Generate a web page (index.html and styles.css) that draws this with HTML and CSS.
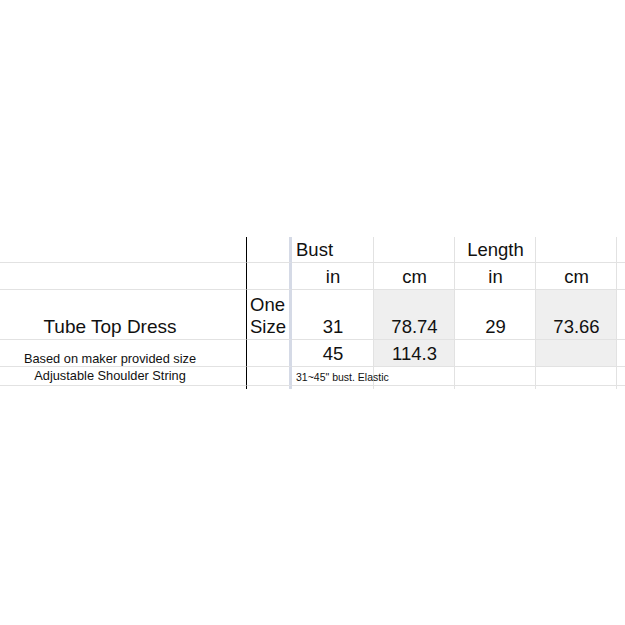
FILE: index.html
```html
<!DOCTYPE html>
<html>
<head>
<meta charset="utf-8">
<link rel="stylesheet" href="styles.css">
</head>
<body>
<div class="sheet">
  <div class="cell name"></div>
  <div class="cell size"></div>
  <div class="cell left">Bust</div>
  <div class="cell"></div>
  <div class="cell center">Length</div>
  <div class="cell"></div>
  <div class="cell last"></div>

  <div class="cell name"></div>
  <div class="cell size"></div>
  <div class="cell center">in</div>
  <div class="cell center">cm</div>
  <div class="cell center">in</div>
  <div class="cell center">cm</div>
  <div class="cell last"></div>

  <div class="cell name center title">Tube Top Dress</div>
  <div class="cell size wrap">One Size</div>
  <div class="cell center">31</div>
  <div class="cell center fill">78.74</div>
  <div class="cell center">29</div>
  <div class="cell center fill">73.66</div>
  <div class="cell last"></div>

  <div class="cell name center small">Based on maker provided size</div>
  <div class="cell size"></div>
  <div class="cell center">45</div>
  <div class="cell center fill">114.3</div>
  <div class="cell"></div>
  <div class="cell fill"></div>
  <div class="cell last"></div>

  <div class="cell name center small note">Adjustable Shoulder String</div>
  <div class="cell size"></div>
  <div class="cell left tiny">31~45" bust. Elastic</div>
  <div class="cell"></div>
  <div class="cell"></div>
  <div class="cell"></div>
  <div class="cell last"></div>

  <div class="cell name stub"></div>
  <div class="cell size stub"></div>
  <div class="cell stub"></div>
  <div class="cell stub"></div>
  <div class="cell stub"></div>
  <div class="cell stub"></div>
  <div class="cell last stub"></div>
</div>
</body>
</html>
```

FILE: styles.css
```css
html, body {
  margin: 0;
  padding: 0;
  background: #ffffff;
}

body {
  font-family: "Liberation Sans", Arial, sans-serif;
  color: #111111;
}

.sheet {
  margin-top: 237px;
  display: grid;
  grid-template-columns: 247px 45px 82px 81px 81px 81px 1fr;
  grid-template-rows: 26px 27px 50px 27px 19px 3px;
  width: 625px;
}

.cell {
  box-sizing: border-box;
  border-right: 1px solid #e2e2e2;
  border-bottom: 1px solid #e2e2e2;
  display: flex;
  align-items: flex-end;
  font-size: 18.5px;
  line-height: 22px;
  padding: 0 3px 1px 4px;
  white-space: nowrap;
  overflow: visible;
}

.cell.name {
  border-right: 1px solid #000000;
  padding-left: 0;
  padding-right: 26px;
}

.cell.size {
  border-right: 3px solid #d5dae6;
  padding-left: 3px;
  padding-right: 0;
}

.cell.last {
  border-right: none;
}

.cell.stub {
  border-bottom: none;
}

.center {
  justify-content: center;
}

.left {
  justify-content: flex-start;
}

.wrap {
  white-space: normal;
}

.fill {
  background: #efefef;
}

.title {
  font-size: 19px;
}

.small {
  font-size: 12.8px;
  line-height: 15px;
  padding-bottom: 0;
}

.note {
  padding-bottom: 2px;
}

.tiny {
  font-size: 10.5px;
  line-height: 13px;
  padding-bottom: 1px;
}
```
